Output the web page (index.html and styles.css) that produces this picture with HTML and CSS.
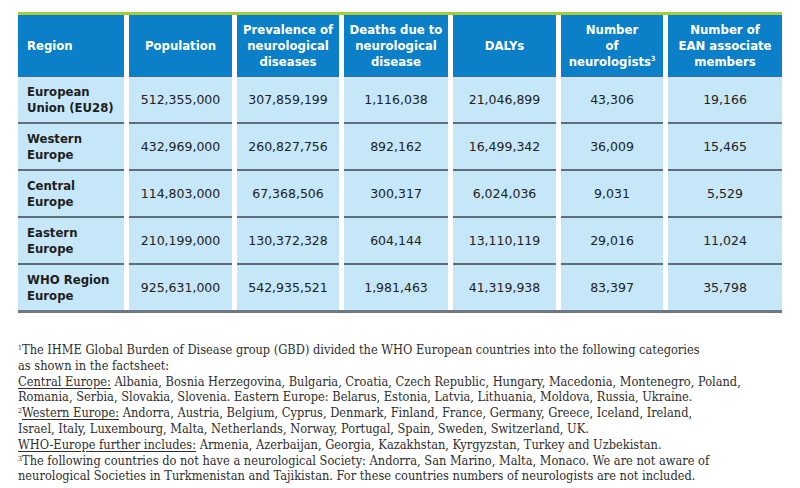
FILE: index.html
```html
<!DOCTYPE html>
<html>
<head>
<meta charset="utf-8">
<link rel="stylesheet" href="styles.css">
</head>
<body>
<div class="page">
  <div class="table-wrap">
    <div class="grid">
      <div class="hcell left"><span>Region</span></div>
      <div class="hcell"><span>Population</span></div>
      <div class="hcell"><span>Prevalence of<br>neurological<br>diseases</span></div>
      <div class="hcell"><span>Deaths due to<br>neurological<br>disease</span></div>
      <div class="hcell"><span>DALYs</span></div>
      <div class="hcell"><span>Number<br>of<br>neurologists<sup class="hsup">3</sup></span></div>
      <div class="hcell"><span>Number of<br>EAN associate<br>members</span></div>

      <div class="cell left"><span>European<br>Union (EU28)</span></div>
      <div class="cell">512,355,000</div>
      <div class="cell">307,859,199</div>
      <div class="cell">1,116,038</div>
      <div class="cell">21,046,899</div>
      <div class="cell">43,306</div>
      <div class="cell">19,166</div>

      <div class="cell left"><span>Western<br>Europe</span></div>
      <div class="cell">432,969,000</div>
      <div class="cell">260,827,756</div>
      <div class="cell">892,162</div>
      <div class="cell">16,499,342</div>
      <div class="cell">36,009</div>
      <div class="cell">15,465</div>

      <div class="cell left"><span>Central<br>Europe</span></div>
      <div class="cell">114,803,000</div>
      <div class="cell">67,368,506</div>
      <div class="cell">300,317</div>
      <div class="cell">6,024,036</div>
      <div class="cell">9,031</div>
      <div class="cell">5,529</div>

      <div class="cell left"><span>Eastern<br>Europe</span></div>
      <div class="cell">210,199,000</div>
      <div class="cell">130,372,328</div>
      <div class="cell">604,144</div>
      <div class="cell">13,110,119</div>
      <div class="cell">29,016</div>
      <div class="cell">11,024</div>

      <div class="cell left last"><span>WHO Region<br>Europe</span></div>
      <div class="cell last">925,631,000</div>
      <div class="cell last">542,935,521</div>
      <div class="cell last">1,981,463</div>
      <div class="cell last">41,319,938</div>
      <div class="cell last">83,397</div>
      <div class="cell last">35,798</div>
    </div>
  </div>

  <div class="notes">
    <p><sup class="fsup">1</sup>The IHME Global Burden of Disease group (GBD) divided the WHO European countries into the following categories<br>as shown in the factsheet:</p>
    <p><u>Central Europe:</u> Albania, Bosnia Herzegovina, Bulgaria, Croatia, Czech Republic, Hungary, Macedonia, Montenegro, Poland,<br>Romania, Serbia, Slovakia, Slovenia. Eastern Europe: Belarus, Estonia, Latvia, Lithuania, Moldova, Russia, Ukraine.</p>
    <p><sup class="fsup">2</sup><u>Western Europe:</u> Andorra, Austria, Belgium, Cyprus, Denmark, Finland, France, Germany, Greece, Iceland, Ireland,<br>Israel, Italy, Luxembourg, Malta, Netherlands, Norway, Portugal, Spain, Sweden, Switzerland, UK.</p>
    <p><u>WHO-Europe further includes:</u> Armenia, Azerbaijan, Georgia, Kazakhstan, Kyrgyzstan, Turkey and Uzbekistan.</p>
    <p><sup class="fsup">3</sup>The following countries do not have a neurological Society: Andorra, San Marino, Malta, Monaco. We are not aware of<br>neurological Societies in Turkmenistan and Tajikistan. For these countries numbers of neurologists are not included.</p>
  </div>
</div>
</body>
</html>
```
FILE: styles.css
```css
html, body {
  margin: 0;
  padding: 0;
  background: #ffffff;
}

.page {
  padding: 12px 18px 0 18px;
  width: 764px;
}

.table-wrap {
  border-top: 3px solid #a4cd3b;
  border-bottom: 3px solid #6f7780;
}

.grid {
  display: grid;
  grid-template-columns: 106px 103px 102px 104px 103px 102px 114px;
  column-gap: 5px;
}

.hcell {
  background: #0b7fc7;
  color: #ffffff;
  font-family: "DejaVu Sans Condensed", "DejaVu Sans", sans-serif;
  font-weight: bold;
  font-size: 13px;
  line-height: 16px;
  height: 61px;
  display: flex;
  align-items: center;
  justify-content: center;
  text-align: center;
  border-bottom: 1px solid #3f6c8f;
}

.hcell.left {
  justify-content: flex-start;
  text-align: left;
  padding-left: 9px;
}

.hsup {
  font-size: 7px;
  vertical-align: 5px;
  line-height: 0;
}

.cell {
  background: #c6e7f8;
  color: #222222;
  font-family: "DejaVu Sans", sans-serif;
  font-size: 12.5px;
  line-height: 16px;
  height: 45px;
  display: flex;
  align-items: center;
  justify-content: center;
  border-bottom: 2px solid #5f6d79;
}

.cell.last {
  border-bottom: none;
}

.cell.left {
  justify-content: flex-start;
  padding-left: 9px;
  font-family: "DejaVu Sans Condensed", "DejaVu Sans", sans-serif;
  font-weight: bold;
  font-size: 13px;
  color: #1e1e1e;
}

.notes {
  margin-top: 29px;
  font-family: "DejaVu Serif Condensed", "DejaVu Serif", serif;
  font-size: 12.7px;
  line-height: 15.8px;
  color: #2e2e2e;
}

.notes p {
  margin: 0;
}

.notes u {
  text-decoration-thickness: 1px;
  text-underline-offset: 2px;
}

.fsup {
  font-size: 7px;
  vertical-align: 4px;
  line-height: 0;
}
```
